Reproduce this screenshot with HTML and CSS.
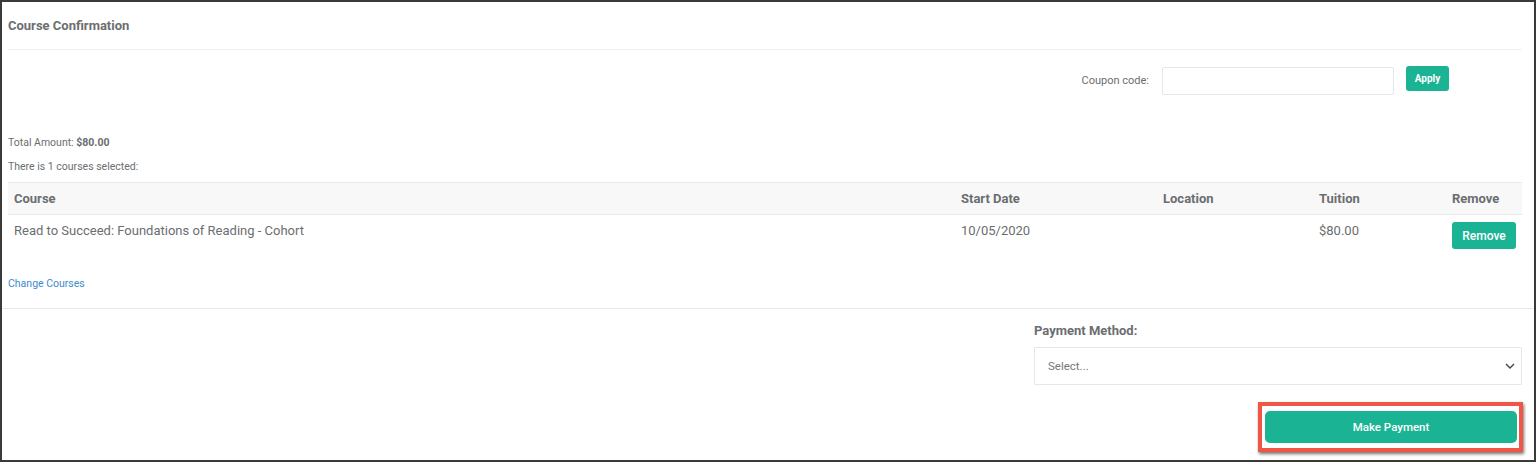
FILE: index.html
```html
<!DOCTYPE html>
<html>
<head>
<meta charset="utf-8">
<link rel="stylesheet" href="styles.css">
</head>
<body>
<div class="frame">
  <div class="panel">
    <div class="title-bar">Course Confirmation</div>
    <div class="coupon-row">
      <label class="coupon-label">Coupon code:</label>
      <div class="coupon-input"></div>
      <button class="btn btn-apply">Apply</button>
    </div>
    <div class="summary summary-total">Total Amount: <b>$80.00</b></div>
    <div class="summary summary-count">There is 1 courses selected:</div>
    <table class="courses">
      <colgroup>
        <col class="c-course"><col class="c-date"><col class="c-loc"><col class="c-tuition"><col class="c-remove">
      </colgroup>
      <thead>
        <tr><th>Course</th><th>Start Date</th><th>Location</th><th>Tuition</th><th>Remove</th></tr>
      </thead>
      <tbody>
        <tr>
          <td>Read to Succeed: Foundations of Reading - Cohort</td>
          <td>10/05/2020</td>
          <td></td>
          <td>$80.00</td>
          <td><button class="btn btn-remove">Remove</button></td>
        </tr>
      </tbody>
    </table>
    <a class="change-link" href="#">Change Courses</a>
  </div>
  <div class="divider"></div>
  <div class="panel payment-panel">
    <div class="payment-col">
      <div class="payment-label">Payment Method:</div>
      <div class="select">
        <span>Select...</span>
        <svg width="10" height="6" viewBox="0 0 10 6"><path d="M1 1l4 4 4-4" fill="none" stroke="#444" stroke-width="1.4"/></svg>
      </div>
      <div class="pay-row">
        <div class="highlight">
          <button class="btn btn-pay">Make Payment</button>
        </div>
      </div>
    </div>
  </div>
</div>
</body>
</html>
```
FILE: styles.css
```css
html, body {
  margin: 0;
  padding: 0;
  background: #fff;
}
.frame {
  width: 1536px;
  height: 462px;
  box-sizing: border-box;
  border: 2px solid #3a3a3a;
  font-family: Roboto, "Liberation Sans", sans-serif;
  color: #6b6e70;
  overflow: hidden;
}
.panel {
  padding: 0 12px 0 6px;
}
.title-bar {
  font-size: 13px;
  font-weight: 700;
  line-height: 18px;
  padding: 15px 0 14px 0;
  border-bottom: 1px solid #eef0f1;
}
.coupon-row {
  display: flex;
  justify-content: flex-end;
  align-items: flex-start;
  margin-top: 16px;
  padding-right: 73px;
}
.coupon-label {
  font-size: 11px;
  line-height: 28px;
  margin-top: 1px;
  margin-right: 13px;
}
.coupon-input {
  width: 230px;
  height: 26px;
  border: 1px solid #e5e6e7;
  border-radius: 2px;
  margin-top: 1px;
  margin-right: 12px;
}
.btn {
  font-family: Roboto, "Liberation Sans", sans-serif;
  background: #1ab394;
  color: #fff;
  border: none;
  border-radius: 3px;
  font-weight: 500;
  cursor: pointer;
  padding: 0;
}
.btn-apply {
  width: 43px;
  height: 25px;
  font-size: 10px;
  font-weight: 700;
}
.summary {
  font-size: 10.5px;
  line-height: 16px;
}
.summary-total {
  margin-top: 40px;
  margin-bottom: 8px;
}
.summary-count {
  margin-bottom: 7px;
}
.summary b {
  font-weight: 700;
}
.courses {
  width: 1514px;
  border-collapse: collapse;
  table-layout: fixed;
  font-size: 13px;
}
.c-course { width: 947px; }
.c-date { width: 202px; }
.c-loc { width: 156px; }
.c-tuition { width: 133px; }
.c-remove { width: 76px; }
.courses th {
  text-align: left;
  font-weight: 700;
  background: #f8f8f9;
  line-height: 15px;
  padding: 8px 6px;
  border-top: 1px solid #e7eaec;
  border-bottom: 1px solid #e7eaec;
}
.courses td {
  vertical-align: top;
  line-height: 17px;
  padding: 7px 6px;
}
.btn-remove {
  width: 64px;
  height: 27px;
  font-size: 12px;
}
.change-link {
  display: block;
  margin-top: 20px;
  font-size: 10.5px;
  line-height: 16px;
  color: #3d8bd0;
  text-decoration: none;
}
.divider {
  margin-top: 16px;
  border-top: 1px solid #e7eaec;
}
.payment-panel {
  display: flex;
  justify-content: flex-end;
}
.payment-col {
  width: 488px;
  display: flex;
  flex-direction: column;
}
.payment-label {
  font-size: 13px;
  font-weight: 700;
  line-height: 18px;
  margin-top: 13px;
  margin-bottom: 7px;
}
.select {
  height: 36px;
  border: 1px solid #e5e6e7;
  border-radius: 1px;
  display: flex;
  align-items: center;
  justify-content: space-between;
  padding: 0 6px 0 13px;
  font-size: 11.5px;
  color: #777;
}
.pay-row {
  display: flex;
  justify-content: flex-end;
  margin-top: 17px;
  margin-right: -1px;
}
.highlight {
  border: 4px solid #ef5646;
  padding: 5px 2px 5px 3px;
  box-shadow: 1px 2px 3px rgba(0,0,0,0.55);
  background: #fff;
}
.btn-pay {
  display: block;
  width: 252px;
  height: 32px;
  border-radius: 5px;
  font-size: 11.5px;
  font-weight: 500;
}
```
